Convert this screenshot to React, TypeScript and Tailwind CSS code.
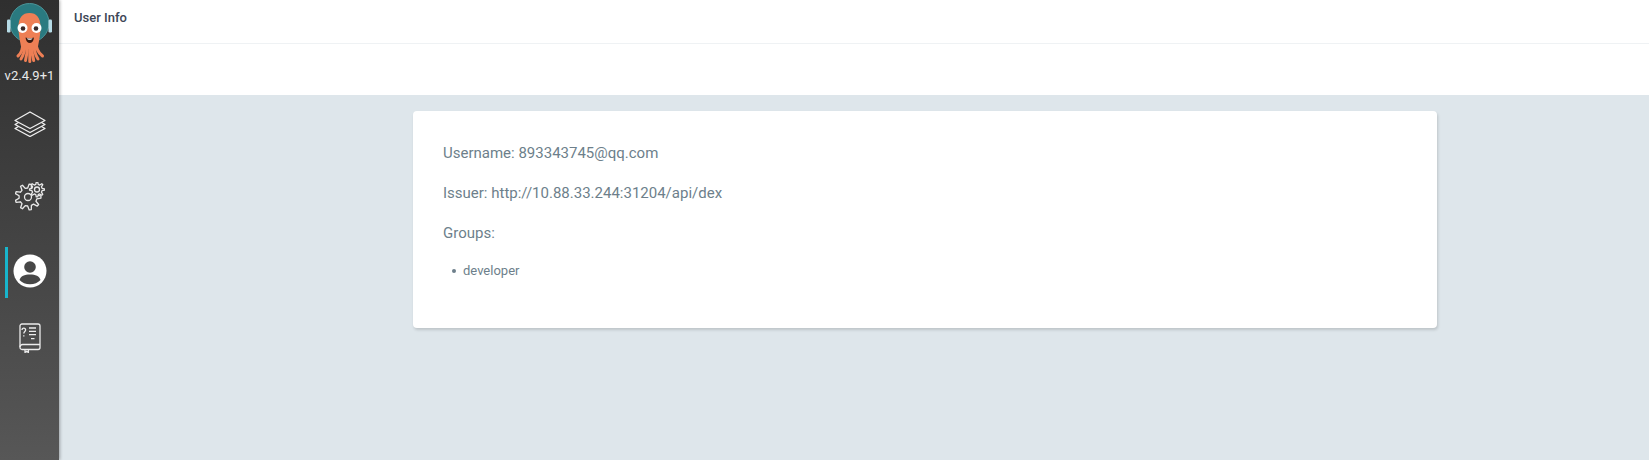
import React from 'react';

const tentacles = [
  'M23 42c0 7-1.500 11-5 14',
  'M25 44c0 7-1.500 11-4 15',
  'M27 45c.5 7-.3 11-1.500 15.500',
  'M29.500 45c.3 7 .3 11 .3 16.500',
  'M32 45c-.3 7 .3 11 1.700 15.500',
  'M34 44c0 7 1.300 11 4 15',
  'M36 42c0 7 2.500 11 6.500 14',
];

function Logo() {
  return (
    <svg viewBox="0 0 60 68" className="w-[60px] h-[68px] block">
      <circle cx="29.500" cy="23" r="19.500" fill="#2a7a80" stroke="#4c9498" strokeWidth="1" />
      <rect x="7" y="19.500" width="3.500" height="13" rx="1.200" fill="#b6dbe6" />
      <rect x="48.500" y="19.500" width="3.500" height="13" rx="1.200" fill="#b6dbe6" />
      {tentacles.map((d) => (
        <path key={d} d={d} fill="none" stroke="#ee7f55" strokeWidth="3" strokeLinecap="round" />
      ))}
      <path d="M18.500 27c0-9.500 4-14 11-14s11 4.500 11 14c0 8-1.500 14-3 22H21.500c-1.500-8-3-14-3-22z" fill="#ee7f55" />
      <circle cx="22.500" cy="28" r="5" fill="#fff" />
      <circle cx="36.500" cy="28" r="5" fill="#fff" />
      <circle cx="23" cy="28.500" r="2.300" fill="#3a2a2a" />
      <circle cx="36" cy="28.500" r="2.300" fill="#3a2a2a" />
      <path d="M25.500 37.500c2.700 1.100 5.800 1.100 8.500 0-.4 3.700-2.200 5.500-4.200 5.500s-3.900-1.800-4.300-5.500z" fill="#3a1d14" />
      <path d="M27 38.300c1.800.4 3.700.4 5.500 0-.3 1-1.500 1.500-2.800 1.500s-2.400-.5-2.700-1.500z" fill="#fff" />
    </svg>
  );
}

function LayersIcon() {
  return (
    <svg viewBox="0 0 32 26" className="w-[32px] h-[26px]" fill="none" stroke="#f0f0f0" strokeWidth="1.300" strokeLinejoin="round">
      <path d="M16 1 31 9.500 16 17.500 1 9.500z" />
      <path d="M4.500 11.500 1 13.500 16 21.500 31 13.500 27.500 11.500" />
      <path d="M4.500 15.500 1 17.500 16 25.500 31 17.500 27.500 15.500" />
    </svg>
  );
}

// outline of a cog with pointy-ish teeth
function gearPath(cx: number, cy: number, outer: number, inner: number, teeth: number) {
  const step = (Math.PI * 2) / teeth;
  const pts: string[] = [];
  for (let i = 0; i < teeth; i++) {
    const a = i * step;
    const list: [number, number][] = [
      [inner, a - step * 0.3],
      [outer, a - step * 0.12],
      [outer, a + step * 0.12],
      [inner, a + step * 0.3],
    ];
    list.forEach(([r, t]) => {
      pts.push(`${(cx + r * Math.cos(t)).toFixed(2)} ${(cy + r * Math.sin(t)).toFixed(2)}`);
    });
  }
  return `M${pts.join('L')}z`;
}

function GearsIcon() {
  return (
    <svg viewBox="0 0 30 29" className="w-[30px] h-[29px]" fill="none" stroke="#e8e8e8" strokeWidth="1.300" strokeLinejoin="round">
      <path d={gearPath(13, 15, 13, 9, 9)} />
      <circle cx="13" cy="15" r="3.500" />
      <path d={gearPath(22, 7.500, 7.500, 5.200, 8)} fill="#404040" />
      <circle cx="22" cy="7.500" r="2.500" />
    </svg>
  );
}

function UserIcon() {
  return (
    <svg viewBox="0 0 34 34" className="w-[34px] h-[34px]">
      <circle cx="17" cy="17" r="16.500" fill="#fff" />
      <circle cx="17" cy="13" r="5.800" fill="#474747" />
      <path d="M6.500 26c1-3.800 5-5.500 10.500-5.500s9.500 1.700 10.500 5.500c-2.500 2.800-6.300 4.300-10.500 4.300S9 28.800 6.500 26z" fill="#474747" />
    </svg>
  );
}

function DocsIcon() {
  return (
    <svg viewBox="0 0 22 30" className="w-[22px] h-[30px]" fill="none" stroke="#ececec" strokeWidth="1.300" strokeLinejoin="round">
      <rect x="1" y="1" width="20" height="25.500" rx="2" />
      <path d="M1 24a2.500 2.500 0 0 1 2.500-2.500H21" />
      <path d="M6 26.500V29.500l1.700-1.300 1.700 1.300v-3" />
      <path d="M10 5h7M10 8.300h7M10 11.700h7M12 15.700h3.500" />
      <path d="M3 7c0-2.600 3.600-2.600 3.600 0 0 1.500-1.800 1.500-1.800 3.400M4.800 12.300v1.200" />
    </svg>
  );
}

export default function App() {
  return (
    <div className="flex h-[460px] bg-[#dee6eb] font-['Roboto',sans-serif] overflow-hidden">
      {/* Sidebar */}
      <nav className="w-[59px] shrink-0 flex flex-col items-center bg-gradient-to-b from-[#2f2f2f] to-[#575757] shadow-[1px_0_3px_rgba(0,0,0,0.3)] z-10">
        <Logo />
        <div className="text-[13px] leading-[16px] h-[16px] text-[#e9e9e9] whitespace-nowrap">v2.4.9+1</div>
        <div className="mt-[27px] h-[25px] flex items-center">
          <LayersIcon />
        </div>
        <div className="mt-[46px] h-[29px] flex items-center">
          <GearsIcon />
        </div>
        <div className="mt-[36px] w-full h-[51px] pb-[3px] flex items-center justify-center relative">
          <div className="absolute left-[5px] top-0 w-[3px] h-[51px] bg-[#18b5cc]" />
          <UserIcon />
        </div>
        <div className="mt-[25px] h-[30px] flex items-center">
          <DocsIcon />
        </div>
      </nav>

      {/* Main */}
      <div className="flex-1 flex flex-col min-w-0">
        <header className="bg-white">
          <div className="h-[44px] border-b border-[#eff2f4] pl-[15px] pt-[10px] text-[13px] leading-[16px] font-medium text-[#3d4656]">
            User Info
          </div>
          <div className="h-[51px]" />
        </header>
        <main className="flex-1 pt-[16px] pl-[354px] pr-[212px]">
          <div className="h-[217px] rounded-[4px] bg-white shadow-[1px_2px_3px_rgba(0,0,0,0.15)] pt-[31px] pl-[30px] text-[#6d7f8b]">
            <p className="text-[15px] leading-[22px]">Username: 893343745@qq.com</p>
            <p className="text-[15px] leading-[22px] mt-[18px]">Issuer: http://10.88.33.244:31204/api/dex</p>
            <p className="text-[15px] leading-[22px] mt-[18px]">Groups:</p>
            <ul className="mt-[17px] pl-[9px] text-[13px] leading-[20px]">
              <li className="flex items-center gap-[7px]">
                <span className="w-[4px] h-[4px] rounded-full bg-[#6d7f8b]" />
                developer
              </li>
            </ul>
          </div>
        </main>
      </div>
    </div>
  );
}
